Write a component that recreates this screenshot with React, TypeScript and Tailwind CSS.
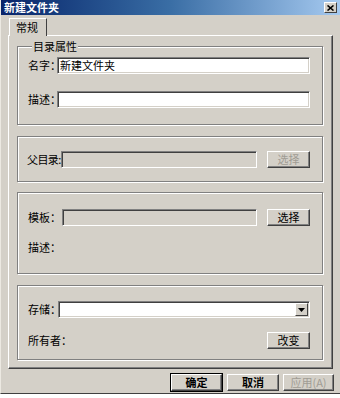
import React from "react";

const font = { fontFamily: '"Noto Sans CJK SC", "Noto Sans", sans-serif' };

function Sunken({ className = "", children }: { className?: string; children?: React.ReactNode }) {
  return (
    <div
      className={
        "h-[17px] border border-t-[#808080] border-l-[#808080] border-b-white border-r-white shadow-[inset_1px_1px_0_#404040,inset_-1px_-1px_0_#d4d0c8] flex items-center " +
        className
      }
    >
      {children}
    </div>
  );
}

function Btn({ children, disabled = false, className = "" }: { children: React.ReactNode; disabled?: boolean; className?: string }) {
  return (
    <div
      className={
        "h-[17px] flex items-center justify-center whitespace-nowrap border border-t-white border-l-white border-b-[#404040] border-r-[#404040] shadow-[inset_-1px_-1px_0_#808080] text-[11px] leading-none " +
        (disabled ? "text-[#a09c94] " : "text-black ") +
        className
      }
    >
      {children}
    </div>
  );
}

function Label({ children, className = "" }: { children: React.ReactNode; className?: string }) {
  return <span className={"shrink-0 whitespace-nowrap " + className}>{children}</span>;
}

const groupCls =
  "border border-[#808080] shadow-[inset_1px_1px_0_#fff,1px_1px_0_#fff] rounded-none";

export default function App() {
  return (
    <div className="w-[340px] h-[398px] bg-white" style={font}>
      <div className="w-[340px] h-[394px] bg-[#d4d0c8] flex flex-col border-l border-l-[#ece9e2] border-b border-b-[#404040]">
        {/* title bar */}
        <div className="h-[15px] flex items-center justify-between pl-[3px] pr-[3px] bg-gradient-to-r from-[#0a246a] via-[#3a6ea5] to-[#a6caf0]">
          <span className="text-white text-[11px] font-bold leading-none">新建文件夹</span>
          <div className="w-[13px] h-[11px] bg-[#d4d0c8] border border-t-white border-l-white border-b-[#404040] border-r-[#404040] flex items-center justify-center">
            <svg width="7" height="6" viewBox="0 0 7 6">
              <path d="M0.5 0.5 L6.5 5.5 M6.5 0.5 L0.5 5.5" stroke="#000" strokeWidth="1.6" />
            </svg>
          </div>
        </div>

        {/* tab row */}
        <div className="pl-[8px] pt-[3px] flex">
          <div className="h-[18px] w-[38px] border-t border-l border-r border-t-white border-l-white border-r-[#404040] flex items-center pl-[6px] text-[11px] leading-none bg-[#d4d0c8] relative z-10 -mb-px">
            常规
          </div>
        </div>

        {/* panel */}
        <div className="ml-[7px] mr-[7px] h-[334px] border border-t-white border-l-white border-b-[#404040] border-r-[#404040] shadow-[inset_-1px_-1px_0_#808080] pl-[8px] pr-[9px] pt-[4px] flex flex-col text-[11px] leading-none">
          {/* group 1 */}
          <fieldset className={groupCls + " h-[85px] pl-[10px] pr-[12px] pb-[18px]"}>
            <legend className="ml-[4px] px-[1px] text-[11px] leading-[12px] bg-[#d4d0c8]">目录属性</legend>
            <div className="flex items-center mt-[5px]">
              <Label className="w-[29px]">名字：</Label>
              <Sunken className="flex-1 bg-white pl-[2px] relative">新建文件夹</Sunken>
            </div>
            <div className="flex items-center mt-[17px]">
              <Label className="w-[29px]">描述：</Label>
              <Sunken className="flex-1 bg-white relative" />
            </div>
          </fieldset>

          {/* group 2 */}
          <div className={groupCls + " mt-[11px] h-[46px] pl-[9px] pr-[12px] flex items-center"}>
            <Label className="w-[34px] tracking-[-0.6px]">父目录:</Label>
            <Sunken className="flex-1 relative" />
            <Btn disabled className="w-[43px] ml-[10px]">选择</Btn>
          </div>

          {/* group 3 */}
          <div className={groupCls + " mt-[10px] h-[82px] pl-[10px] pr-[12px] flex flex-col"}>
            <div className="flex items-center mt-[16px]">
              <Label className="w-[34px]">模板：</Label>
              <Sunken className="flex-1 relative" />
              <Btn className="w-[43px] ml-[10px]">选择</Btn>
            </div>
            <div className="mt-[16px]">描述：</div>
          </div>

          {/* group 4 */}
          <div className={groupCls + " mt-[11px] h-[75px] pl-[10px] pr-[12px] flex flex-col"}>
            <div className="flex items-center mt-[15px]">
              <Label className="w-[30px]">存储：</Label>
              <Sunken className="flex-1 bg-white justify-end pr-[1px] relative">
                <div className="w-[13px] h-[13px] bg-[#d4d0c8] border border-t-white border-l-white border-b-[#404040] border-r-[#404040] flex items-center justify-center">
                  <svg width="7" height="4" viewBox="0 0 7 4">
                    <path d="M0 0 H7 L3.5 4 Z" fill="#000" />
                  </svg>
                </div>
              </Sunken>
            </div>
            <div className="flex items-center justify-between mt-[14px]">
              <Label>所有者：</Label>
              <Btn className="w-[43px]">改变</Btn>
            </div>
          </div>
        </div>

        {/* bottom buttons */}
        <div className="flex justify-end gap-[4px] pr-[6px] mt-[4px]">
          <div className="border border-black">
            <Btn className="w-[51px] font-bold">确定</Btn>
          </div>
          <div className="pt-px">
            <Btn className="w-[52px] font-bold">取消</Btn>
          </div>
          <div className="pt-px">
            <Btn disabled className="w-[51px]">应用(A)</Btn>
          </div>
        </div>
      </div>
    </div>
  );
}
